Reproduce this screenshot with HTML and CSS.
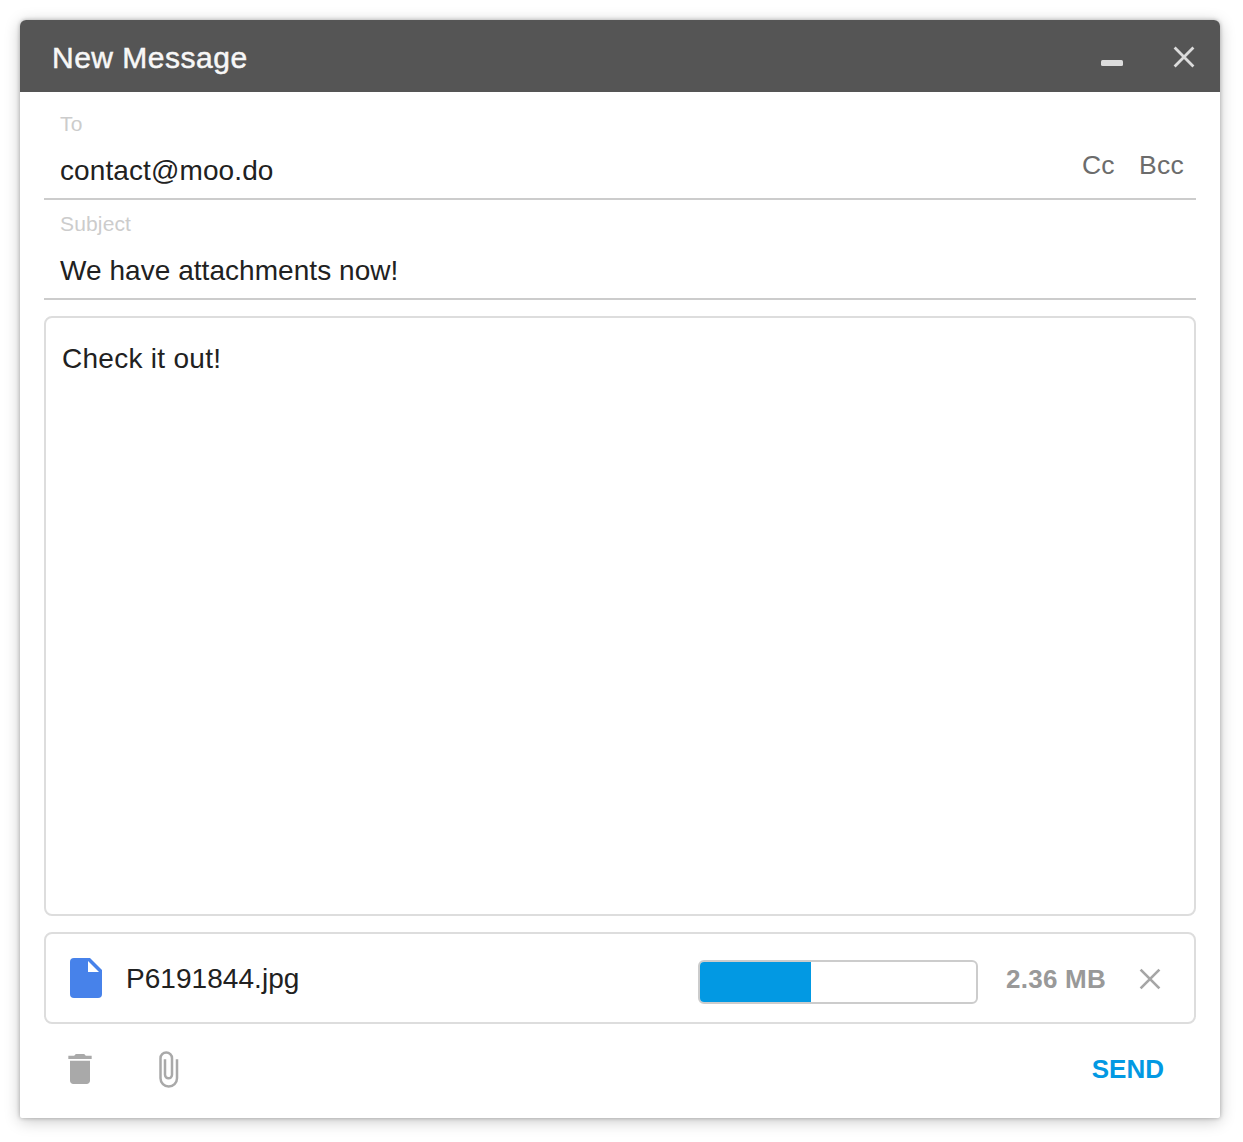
FILE: index.html
```html
<!DOCTYPE html>
<html lang="en">
<head>
<meta charset="utf-8">
<title>New Message</title>
<link rel="stylesheet" href="styles.css">
</head>
<body>
<main class="composer">
  <header class="titlebar">
    <h1 class="title">New Message</h1>
    <button class="icon-button" aria-label="Minimize"><svg width="24" height="24" viewBox="0 0 24 24"><rect x="1" y="16" width="22" height="6" rx="1.5" fill="#dcdcdc"/></svg></button>
    <button class="icon-button" aria-label="Close"><svg width="24" height="24" viewBox="0 0 24 24"><path d="M2.6 3.6l18.8 18.8M21.4 3.6L2.6 22.4" stroke="#dcdcdc" stroke-width="2.8"/></svg></button>
  </header>
  <section class="field field-first">
    <div class="field-main">
      <span class="label">To</span>
      <span class="value">contact@moo.do</span>
    </div>
    <div class="copies"><span>Cc</span><span>Bcc</span></div>
  </section>
  <section class="field">
    <div class="field-main">
      <span class="label">Subject</span>
      <span class="value subject">We have attachments now!</span>
    </div>
  </section>
  <section class="message">Check it out!</section>
  <section class="attachment">
    <svg class="file-icon" width="32" height="40" viewBox="0 0 32 40"><path d="M4 0H20L32 12V36a4 4 0 0 1-4 4H4a4 4 0 0 1-4-4V4a4 4 0 0 1 4-4z" fill="#4782ea"/><path d="M18 3v11h11z" fill="#fff"/></svg>
    <span class="filename">P6191844.jpg</span>
    <div class="progress"><div class="progress-fill" style="width:40.1%"></div></div>
    <span class="size">2.36 MB</span>
    <button class="icon-button" aria-label="Remove attachment"><svg width="24" height="24" viewBox="0 0 24 24"><path d="M2.6 3.6l18.8 18.8M21.4 3.6L2.6 22.4" stroke="#a6a6a6" stroke-width="2.7"/></svg></button>
  </section>
  <footer class="actions">
    <button class="icon-button" aria-label="Delete"><svg width="40" height="40" viewBox="0 0 24 24" fill="#a9a9a9"><path d="M6 19c0 1.1.9 2 2 2h8c1.1 0 2-.9 2-2V7H6v12zM19 4h-3.5l-1-1h-5l-1 1H5v2h14V4z"/></svg></button>
    <button class="icon-button" aria-label="Attach"><svg width="40" height="40" viewBox="0 0 40 40" fill="none"><path d="M29 10.2V29.2a8.25 8.25 0 0 1-16.5 0V9.2a5.75 5.75 0 0 1 11.5 0V25.8a3.5 3.5 0 0 1-7 0V10.2" stroke="#a9a9a9" stroke-width="2.5"/></svg></button>
    <button class="send">SEND</button>
  </footer>
</main>
</body>
</html>
```
FILE: styles.css
```css
* { box-sizing: border-box; }
body {
  margin: 0;
  padding: 20px;
  background: #fff;
  color: #212121;
  font: 28px/36px "Liberation Sans", Arial, sans-serif;
}
button {
  border: 0;
  padding: 0;
  background: none;
  font: inherit;
}
.icon-button { display: flex; }
.composer {
  display: flex;
  flex-direction: column;
  width: 1200px;
  height: 1098px;
  border-radius: 6px 6px 2px 2px;
  background: #fff;
  box-shadow: 0 0 4px rgba(0, 0, 0, .28), 0 3px 16px rgba(0, 0, 0, .22);
}
.titlebar {
  display: flex;
  align-items: center;
  gap: 48px;
  height: 72px;
  padding: 0 24px 0 32px;
  border-radius: 6px 6px 0 0;
  background: #555;
}
.title {
  flex: 1;
  margin: 0;
  padding-top: 3px;
  color: #f7f7f7;
  font-size: 30px;
  font-weight: 400;
  letter-spacing: .5px;
  -webkit-text-stroke: .5px #f7f7f7;
}
.field {
  display: flex;
  justify-content: space-between;
  align-items: flex-end;
  margin: 0 24px;
  padding: 12px 12px 9px 16px;
  border-bottom: 2px solid #ccc;
}
.field-first { padding-top: 20px; }
.field-main {
  display: flex;
  flex-direction: column;
  gap: 17px;
}
.label {
  color: #ccc;
  font-size: 21px;
  line-height: 24px;
  letter-spacing: .15px;
}
.value { letter-spacing: .1px; }
.subject { letter-spacing: .05px; }
.copies {
  display: flex;
  gap: 24px;
  padding-bottom: 6px;
  color: #6c6c6c;
  font-size: 26.5px;
  letter-spacing: .3px;
}
.message {
  height: 600px;
  margin: 16px 24px;
  padding: 23px 16px;
  border: 2px solid #ddd;
  border-radius: 8px;
  letter-spacing: .28px;
}
.attachment {
  display: flex;
  align-items: center;
  height: 92px;
  margin: 0 24px;
  padding: 0 32px 0 24px;
  border: 2px solid #ddd;
  border-radius: 8px;
}
.file-icon { margin-right: 24px; }
.filename {
  flex: 1;
  padding-top: 2px;
  letter-spacing: .05px;
}
.progress {
  width: 280px;
  height: 44px;
  margin: 8px 28px 0 0;
  border: 2px solid #ccc;
  border-radius: 6px;
  overflow: hidden;
}
.progress-fill {
  height: 100%;
  background: #0299e3;
}
.size {
  width: 100px;
  margin-right: 32px;
  padding-top: 2px;
  color: #999;
  font-size: 26px;
  font-weight: 700;
  letter-spacing: .25px;
  white-space: nowrap;
}
.actions {
  display: flex;
  align-items: center;
  flex: 1;
  gap: 48px;
  padding: 0 56px 4px 40px;
}
.send {
  margin-left: auto;
  color: #0299e3;
  font-size: 26px;
  font-weight: 700;
}
```
